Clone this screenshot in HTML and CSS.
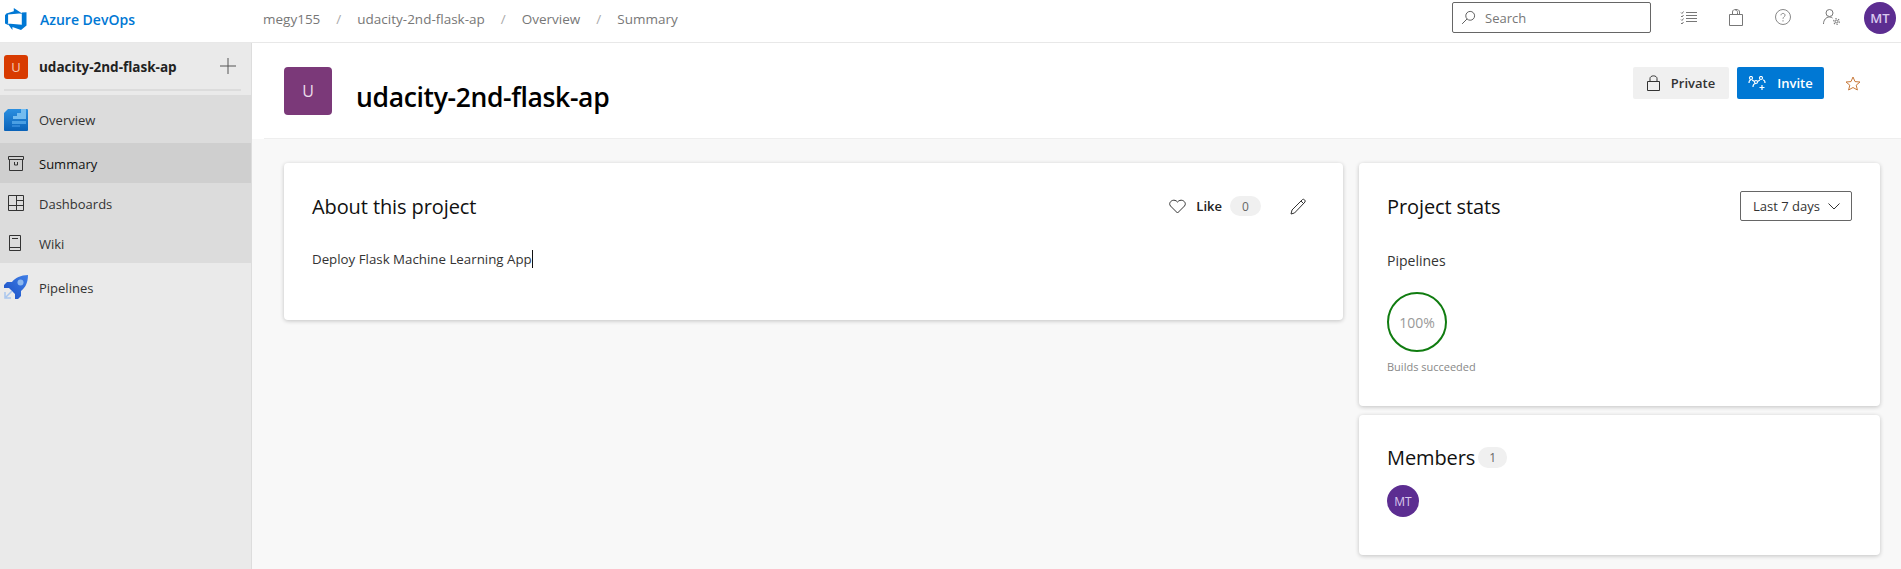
FILE: index.html
```html
<!DOCTYPE html>
<html lang="en">
<head>
  <meta charset="UTF-8" />
  <title>Summary - Overview</title>
  <link rel="stylesheet" href="styles.css">
</head>
<body>

  <header class="topbar">
    <div class="brand">
      <svg class="brand-logo" viewBox="0 0 22 22" width="22" height="22">
        <path fill="#0078d4" d="M21.500 4.200v13.400L16 22l-8.600-3.100v3.100l-4.900-6.400 14.300 1.100V4.500zM16.800 5.200 8.800 0v3.300L1.400 5.500 0 7.300v8.300l3.100 1.300V6.500z"/>
      </svg>
      <span class="brand-name">Azure DevOps</span>
    </div>
    <nav class="crumbs">
      <span>megy155</span><i>/</i>
      <span>udacity-2nd-flask-ap</span><i>/</i>
      <span>Overview</span><i>/</i>
      <span>Summary</span>
    </nav>
    <div class="search">
      <svg viewBox="0 0 16 16" width="15" height="15" fill="none" stroke="#555">
        <circle cx="9.800" cy="6.200" r="4.700"/><path d="M6.400 9.600 1.200 14.800"/>
      </svg>
      <span>Search</span>
    </div>
    <div class="top-icons">
      <svg viewBox="0 0 17 13" width="17" height="13" fill="none" stroke="#777">
        <path d="M6 1.500h11M6 4.500h11M6 7.500h11M6 10.500h11M1 1.500l1 1 1.500-2M1 5l1 1 1.500-2M1 8.500l1 1 1.500-2M1 12l1 1 1.500-2"/>
      </svg>
      <svg viewBox="0 0 14 17" width="14" height="17" fill="none" stroke="#777">
        <path d="M.5 5.500h13v11H.5zM3.500 5.500V3C3.500 1 5 .5 7 .5s3.500.5 3.500 2.500v2.500M6 .8C8 1 8.500 2 8.500 3.500v2"/>
      </svg>
      <svg viewBox="0 0 16 16" width="16" height="16" fill="none" stroke="#888">
        <circle cx="8" cy="8" r="7.500"/><path d="M6 6.300C6 3.800 10 3.800 10 6.300 10 7.800 8 7.800 8 9.800M8 11.200v1.300"/>
      </svg>
      <svg viewBox="0 0 17 16" width="17" height="16" fill="none" stroke="#777">
        <circle cx="6.500" cy="4" r="3.500"/><path d="M.5 15c0-4 2.500-7 6-7 1.300 0 2.300.3 3 1"/>
        <circle cx="13.500" cy="12.500" r="1.300"/><circle cx="13.500" cy="12.500" r="2.800" stroke-dasharray="1.400 1.500" stroke-width="1.200"/>
      </svg>
    </div>
    <div class="avatar avatar-top">MT</div>
  </header>

  <div class="main">
    <aside class="sidebar">
      <div class="project-row">
        <div class="project-icon">U</div>
        <span class="project-name">udacity-2nd-flask-ap</span>
        <svg class="plus" viewBox="0 0 16 16" width="16" height="16" stroke="#555"><path d="M8 0v16M0 8h16"/></svg>
      </div>
      <div class="nav-group">
        <div class="nav-item nav-top">
          <svg viewBox="0 0 24 24" width="24" height="24">
            <defs><linearGradient id="ov" x1="0" y1="0" x2="0" y2="1"><stop offset="0" stop-color="#2b8fe0"/><stop offset="1" stop-color="#0a62b8"/></linearGradient></defs>
            <path fill="url(#ov)" d="M4 2h19a1 1 0 0 1 1 1v20a1 1 0 0 1-1 1H1a1 1 0 0 1-1-1V6z"/>
            <path fill="#74bcef" d="M9 12V9h4V6h4V2h5v10z"/>
            <path fill="#4a9fe3" d="M8 14h14v3H8z"/>
            <path fill="#2f86d6" d="M8 18h8v2H8z"/>
          </svg>
          <span>Overview</span>
        </div>
        <div class="nav-item nav-sub active">
          <svg viewBox="0 0 16 15" width="16" height="15" fill="none" stroke="#333">
            <path d="M.5.500h15v3H.5zM1.500 3.500v11h13v-11M6.500 6v3h3V6"/>
          </svg>
          <span>Summary</span>
        </div>
        <div class="nav-item nav-sub">
          <svg viewBox="0 0 16 16" width="16" height="16" fill="none" stroke="#333">
            <path d="M.5.500h15v15H.5zM.5 10.500h15M8.500.500v15M8.500 5.500h7"/>
          </svg>
          <span>Dashboards</span>
        </div>
        <div class="nav-item nav-sub">
          <svg viewBox="0 0 14 16" width="14" height="16" fill="none" stroke="#333">
            <path d="M1.500.500h11v15h-11zM1.500 12.500h11M4 3.500h6"/>
          </svg>
          <span>Wiki</span>
        </div>
      </div>
      <div class="nav-item nav-top">
        <svg viewBox="0 0 24 24" width="24" height="24">
          <defs><linearGradient id="pi" x1="1" y1="0" x2="0" y2="1"><stop offset="0" stop-color="#3f7ee6"/><stop offset="1" stop-color="#1a4fc4"/></linearGradient></defs>
          <path fill="url(#pi)" d="M24 0C24 8 21 13 17 16V21L14 24H11V19L5 13H0V10L3 7H8C11 3 17 0 24 0z"/>
          <circle cx="16.500" cy="7.500" r="3" fill="#8db8ef"/>
          <path fill="none" stroke="#a9c6ee" stroke-width="1.500" d="M1 17v6h6M2 22l6-6"/>
        </svg>
        <span>Pipelines</span>
      </div>
    </aside>

    <main class="content">
      <div class="page-head">
        <div class="head-inner">
          <div class="head-avatar">U</div>
          <h1>udacity-2nd-flask-ap</h1>
          <div class="head-actions">
            <button class="btn btn-plain">
              <svg viewBox="0 0 13 16" width="13" height="16" fill="none" stroke="#333"><path d="M.5 6.500h12v9H.5zM3 6.500V3.500C3 .0 10 .0 10 3.500v3"/></svg>
              Private
            </button>
            <button class="btn btn-primary">
              <svg viewBox="0 0 18 14" width="18" height="14" fill="none" stroke="#fff" stroke-width="1.200"><circle cx="3" cy="2" r="1.500"/><circle cx="13" cy="2" r="1.500"/><circle cx="8" cy="6" r="1.500"/><path d="M4 4l2.500 1.500M12 4l-2.500 1.500M5 11c0-2 1-3.500 3-3.500M1 7c0-1.500.5-3 2-3M15 4c1.500 0 2 1.500 2 3M14 9v5M11.500 11.500h5"/></svg>
              Invite
            </button>
            <svg class="star" viewBox="0 0 16 15" width="16" height="15" fill="none" stroke="#c8793a"><path d="M8 1l2 4.600 5 .4-3.800 3.200 1.200 4.800L8 11.500 3.600 14l1.200-4.800L1 6l5-.4z"/></svg>
          </div>
        </div>
      </div>

      <div class="cards">
        <section class="card about">
          <div class="card-head">
            <h2>About this project</h2>
            <svg viewBox="0 0 17 15" width="17" height="15" fill="none" stroke="#333"><path d="M8.500 14 1.500 7C-1.500 3.500 4.500-1.500 8.500 3 12.500-1.500 18.500 3.500 15.500 7z"/></svg>
            <span class="like">Like</span>
            <span class="pill">0</span>
            <svg class="pencil" viewBox="0 0 17 17" width="17" height="17" fill="none" stroke="#333"><path d="M1 16l1-4L12.500 1.500c1-1 3.500 1 2.500 2.500L4.500 15zM11 3l3 3"/></svg>
          </div>
          <p class="desc"><span class="caret">Deploy Flask Machine Learning App</span></p>
        </section>

        <div class="side">
          <section class="card stats">
            <div class="card-head">
              <h2>Project stats</h2>
              <div class="select">
                Last 7 days
                <svg viewBox="0 0 12 7" width="12" height="7" fill="none" stroke="#333"><path d="M.5.500 6 6 11.500.500"/></svg>
              </div>
            </div>
            <div class="stat-label">Pipelines</div>
            <div class="ring">100%</div>
            <div class="ring-note">Builds succeeded</div>
          </section>

          <section class="card members">
            <div class="members-head">
              <h2>Members</h2>
              <span class="pill">1</span>
            </div>
            <div class="avatar avatar-member">MT</div>
          </section>
        </div>
      </div>
    </main>
  </div>

</body>
</html>
```

FILE: styles.css
```css
html, body {
  margin: 0;
  height: 100%;
}

body {
  font-family: "Open Sans", sans-serif;
  font-size: 13px;
  color: #222;
  background: #f8f8f8;
  display: flex;
  flex-direction: column;
  overflow: hidden;
}

h1, h2, p {
  margin: 0;
}

/* Barra superior */
.topbar {
  height: 43px;
  flex: none;
  box-sizing: border-box;
  display: flex;
  align-items: center;
  background: #fff;
  border-bottom: 1px solid #e8e8e8;
  padding: 0 5px 4px 0;
}

.brand {
  width: 263px;
  display: flex;
  align-items: center;
  padding-left: 5px;
  box-sizing: border-box;
}

.brand-name {
  margin-left: 13px;
  color: #0078d4;
  font-weight: 600;
  font-size: 14px;
}

.crumbs {
  display: flex;
  align-items: center;
  gap: 16px;
  color: #777;
  font-size: 13.500px;
  flex: 1;
}

.crumbs i {
  font-style: normal;
  color: #aaa;
}

.search {
  width: 199px;
  height: 31px;
  box-sizing: border-box;
  border: 1px solid #666;
  border-radius: 2px;
  display: flex;
  align-items: center;
  gap: 9px;
  padding-left: 8px;
  color: #777;
  margin-top: -3px;
}

.top-icons {
  display: flex;
  align-items: center;
  gap: 32px;
  margin-left: 29px;
  margin-top: -4px;
}

.avatar {
  border-radius: 50%;
  background: #5c2d91;
  color: #d9c8ee;
  display: flex;
  align-items: center;
  justify-content: center;
  font-size: 13px;
}

.avatar-top {
  width: 32px;
  height: 32px;
  margin-left: 24px;
  margin-top: -2px;
  font-weight: 600;
}

.main {
  flex: 1;
  display: flex;
  min-height: 0;
}

/* Barra lateral */
.sidebar {
  width: 252px;
  flex: none;
  box-sizing: border-box;
  background: #eaeaea;
  border-right: 1px solid #ddd;
}

.project-row {
  height: 48px;
  margin: 0 10px 4px 4px;
  display: flex;
  align-items: center;
  border-bottom: 2px solid #dcdcdc;
  padding: 1px 5px 0 0;
  box-sizing: border-box;
}

.project-icon {
  width: 24px;
  height: 24px;
  border-radius: 3px;
  background: #d83b01;
  color: #f7c9b3;
  display: flex;
  align-items: center;
  justify-content: center;
  font-size: 13px;
}

.project-name {
  margin-left: 11px;
  font-weight: 700;
  font-size: 13.500px;
  flex: 1;
}

.plus {
  margin-top: -2px;
}

.nav-group {
  background: #dcdcdc;
  height: 168px;
}

.nav-item {
  display: flex;
  align-items: center;
  color: #333;
  font-size: 13px;
  position: relative;
}

.nav-item span {
  padding-top: 1px;
}

.nav-top {
  height: 48px;
  padding-left: 4px;
  gap: 11px;
}

.nav-sub {
  height: 40px;
}

.nav-sub svg {
  margin-left: 8px;
}

.nav-sub span {
  position: absolute;
  left: 39px;
}

.active {
  background: #cfcfcf;
  color: #111;
}

/* Contenido */
.content {
  flex: 1;
  min-width: 0;
}

.page-head {
  background: #fff;
  padding-left: 12px;
}

.head-inner {
  height: 95px;
  display: flex;
  align-items: center;
  border-bottom: 1px solid #eee;
  padding: 0 22px 0 20px;
}

.head-avatar {
  width: 48px;
  height: 48px;
  border-radius: 4px;
  background: #7b3979;
  color: #eadcea;
  display: flex;
  align-items: center;
  justify-content: center;
  font-size: 16px;
}

.page-head h1 {
  margin: 12px 0 0 24px;
  font-size: 26.500px;
  letter-spacing: -0.350px;
  font-weight: 600;
  color: #000;
  flex: 1;
}

.head-actions {
  display: flex;
  align-items: center;
  margin-top: -15px;
}

.btn {
  height: 32px;
  border: 0;
  border-radius: 2px;
  display: flex;
  align-items: center;
  justify-content: center;
  gap: 11px;
  font-family: inherit;
  font-size: 13px;
  font-weight: 600;
}

.btn-plain {
  width: 96px;
  background: #f0f0f0;
  color: #333;
}

.btn-primary {
  width: 87px;
  margin-left: 8px;
  background: #0078d4;
  color: #fff;
}

.star {
  margin-left: 21px;
  margin-right: 18px;
}

.cards {
  display: grid;
  grid-template-columns: 1059px 521px;
  gap: 16px;
  align-items: start;
  padding: 24px 0 0 32px;
}

.card {
  background: #fff;
  border-radius: 4px;
  box-shadow: 0 1px 4px rgba(0, 0, 0, .22);
  padding: 28px;
  box-sizing: border-box;
}

.card h2 {
  font-size: 20px;
  font-weight: 400;
  letter-spacing: -0.100px;
  color: #111;
}

.card-head {
  display: flex;
  align-items: center;
  height: 30px;
}

.card-head h2 {
  flex: 1;
}

.about {
  height: 157px;
}

.like {
  margin-left: 10px;
  font-weight: 600;
  font-size: 13px;
}

.pill {
  display: inline-flex;
  align-items: center;
  justify-content: center;
  width: 31px;
  height: 20px;
  border-radius: 10px;
  background: #f0f0f0;
  color: #666;
  font-size: 12px;
}

.about .pill {
  margin-left: 8px;
}

.pencil {
  margin-left: 29px;
  margin-right: 8px;
}

.desc {
  margin-top: 29px;
  font-size: 13.300px;
  color: #333;
}

.caret {
  border-right: 1px solid #111;
}

.side {
  display: flex;
  flex-direction: column;
  gap: 9px;
}

.stats {
  height: 243px;
}

.select {
  width: 112px;
  height: 30px;
  box-sizing: border-box;
  border: 1px solid #666;
  border-radius: 2px;
  display: flex;
  align-items: center;
  justify-content: space-between;
  padding: 0 11px 0 12px;
  color: #333;
  font-size: 13px;
}

.stat-label {
  margin-top: 30px;
  font-size: 14px;
  color: #333;
}

.ring {
  width: 60px;
  height: 60px;
  box-sizing: border-box;
  margin-top: 22px;
  border: 2px solid #107c10;
  border-radius: 50%;
  display: flex;
  align-items: center;
  justify-content: center;
  font-size: 14px;
  color: #999;
}

.ring-note {
  margin-top: 7px;
  font-size: 11px;
  color: #888;
}

.members {
  height: 140px;
}

.members-head {
  display: flex;
  align-items: center;
  gap: 3px;
  margin-top: 1px;
}

.members .pill {
  width: 29px;
  height: 21px;
}

.avatar-member {
  width: 32px;
  height: 32px;
  margin-top: 14px;
  font-size: 12px;
}
```
